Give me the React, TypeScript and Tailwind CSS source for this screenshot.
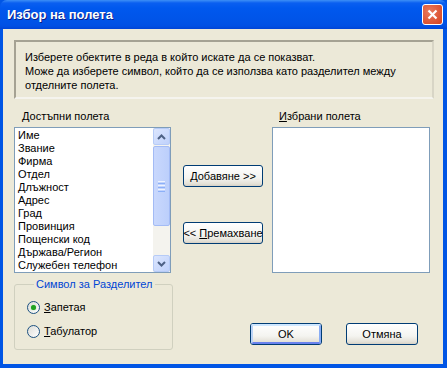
import React from "react"

const fields = [
  "Име",
  "Звание",
  "Фирма",
  "Отдел",
  "Длъжност",
  "Адрес",
  "Град",
  "Провинция",
  "Пощенски код",
  "Държава/Регион",
  "Служебен телефон",
]

function XpButton({
  children,
  isDefault,
  className,
}: {
  children: React.ReactNode
  isDefault?: boolean
  className?: string
}) {
  return (
    <div
      className={`flex items-center justify-center rounded-[3px] border border-[#003c74] bg-[linear-gradient(to_bottom,#ffffff_0%,#f4f4f0_60%,#e3e0d6_90%,#d6d0c5_100%)] ${className ?? ""}`}
    >
      <div
        className={`flex h-full w-full items-center justify-center rounded-[2px] ${
          isDefault
            ? "border-2 border-t-[#cee7ff] border-l-[#bcd4f6] border-r-[#89adf4] border-b-[#6982ee]"
            : "border border-transparent"
        }`}
      >
        <span className="whitespace-nowrap leading-[13px] text-black">{children}</span>
      </div>
    </div>
  )
}

function Arrow({ up }: { up?: boolean }) {
  return (
    <svg width="9" height="6" viewBox="0 0 9 6">
      <path
        d={up ? "M1 5 L4.5 1.5 L8 5" : "M1 1 L4.5 4.5 L8 1"}
        fill="none"
        stroke="#4d6185"
        strokeWidth="2"
      />
    </svg>
  )
}

function ScrollBtn({ up }: { up?: boolean }) {
  return (
    <div className="flex h-[17px] w-[17px] items-center justify-center rounded-[2px] border border-[#b6cbf7] bg-[linear-gradient(135deg,#dce6fe,#bfd1fb)]">
      <Arrow up={up} />
    </div>
  )
}

function Scrollbar() {
  return (
    <div className="flex h-full w-[17px] flex-col bg-[#f4f3ee]">
      <ScrollBtn up />
      <div className="mt-[1px] flex h-[80px] w-[17px] flex-col items-center justify-center gap-[1px] rounded-[2px] border border-[#a3bbf5] bg-[linear-gradient(to_right,#c9d8fd,#bccffb)]">
        <div className="h-[1px] w-[7px] bg-[#eef3fe]" />
        <div className="h-[1px] w-[7px] bg-[#8cb0f8]" />
        <div className="h-[1px] w-[7px] bg-[#eef3fe]" />
        <div className="h-[1px] w-[7px] bg-[#8cb0f8]" />
        <div className="h-[1px] w-[7px] bg-[#eef3fe]" />
        <div className="h-[1px] w-[7px] bg-[#8cb0f8]" />
      </div>
      <div className="flex-1" />
      <ScrollBtn />
    </div>
  )
}

function Radio({ checked, children }: { checked?: boolean; children: React.ReactNode }) {
  return (
    <div className="flex items-center">
      <div className="flex h-[13px] w-[13px] items-center justify-center rounded-full border border-[#1c5180] bg-[linear-gradient(135deg,#dcdcd7,#ffffff)]">
        {checked && <div className="h-[5px] w-[5px] rounded-full bg-[#21a121] shadow-[0_0_1px_#55d855]" />}
      </div>
      <span className="ml-[4px] leading-[13px]">{children}</span>
    </div>
  )
}

export default function App() {
  return (
    <div className="flex h-[368px] w-[447px] flex-col bg-[#0055e5] font-['Liberation_Sans',sans-serif] text-[11px] text-black">
      <div className="flex h-[29px] shrink-0 items-center justify-between rounded-t-[7px] bg-[linear-gradient(to_bottom,#3d8ff6_0px,#0a5ff0_3px,#0058ee_8px,#0054e8_20px,#0050e4_26px,#0044d6_29px)] pl-[7px] pr-[4px]">
        <span className="text-[13px] font-bold text-white [text-shadow:1px_1px_#0a1e8a]">
          Избор на полета
        </span>
        <div className="flex h-[21px] w-[21px] items-center justify-center rounded-[3px] border border-white bg-[radial-gradient(circle_at_35%_35%,#e87a5e,#d6411e)]">
          <svg width="11" height="11" viewBox="0 0 11 11">
            <path d="M1.5 1.5 L9.5 9.5 M9.5 1.5 L1.5 9.5" stroke="#fff" strokeWidth="2.2" />
          </svg>
        </div>
      </div>

      <div className="flex flex-1 flex-col border-b-[4px] border-l-[3px] border-r-[4px] border-[#0055e5] bg-[#ece9d8] pl-[11px]">
        <div className="mt-[11px] h-[59px] w-[420px] border-2 border-b-[#f5f4ee] border-l-[#a5a293] border-r-[#d8d5c6] border-t-[#a5a293] pl-[9px] pt-[8px] leading-[14px]">
          <div>Изберете обектите в реда в който искате да се показват.</div>
          <div>Може да изберете символ, който да се използва като разделител между</div>
          <div>отделните полета.</div>
        </div>

        <div className="mt-[11px] flex">
          <div className="flex flex-col">
            <div className="h-[17px] pl-[8px] leading-[13px]">
              <u>Д</u>остъпни полета
            </div>
            <div className="flex h-[146px] w-[157px] border border-[#7f9db9] bg-white">
              <div className="flex-1 pl-[3px] pt-[1px]">
                {fields.map((f) => (
                  <div key={f} className="h-[13px] leading-[13px]">
                    {f}
                  </div>
                ))}
              </div>
              <Scrollbar />
            </div>
          </div>

          <div className="ml-[12px] flex flex-col pt-[55px]">
            <XpButton className="h-[22px] w-[80px]">
              <u>Д</u>обавяне &gt;&gt;
            </XpButton>
            <XpButton className="mt-[35px] h-[22px] w-[80px]">
              &lt;&lt; <u>П</u>ремахване
            </XpButton>
          </div>

          <div className="ml-[9px] flex flex-col">
            <div className="h-[17px] pl-[7px] leading-[13px]">
              <u>И</u>збрани полета
            </div>
            <div className="h-[146px] w-[158px] border border-[#7f9db9] bg-white" />
          </div>
        </div>

        <div className="flex">
          <fieldset className="mt-[5px] h-[72px] w-[159px] rounded-[3px] border border-[#d0d0bf] pl-[12px]">
            <legend className="ml-[7px] px-[2px] leading-[13px] text-[#0046d5]">
              Символ за Разделител
            </legend>
            <div className="mt-[10px] flex flex-col gap-[11px]">
              <Radio checked>
                <u>З</u>апетая
              </Radio>
              <Radio>
                <u>Т</u>абулатор
              </Radio>
            </div>
          </fieldset>
          <div className="ml-[77px] mt-[50px] flex gap-[24px]">
            <XpButton isDefault className="h-[22px] w-[72px]">
              OK
            </XpButton>
            <XpButton className="h-[22px] w-[72px]">Отмяна</XpButton>
          </div>
        </div>
      </div>
    </div>
  )
}
